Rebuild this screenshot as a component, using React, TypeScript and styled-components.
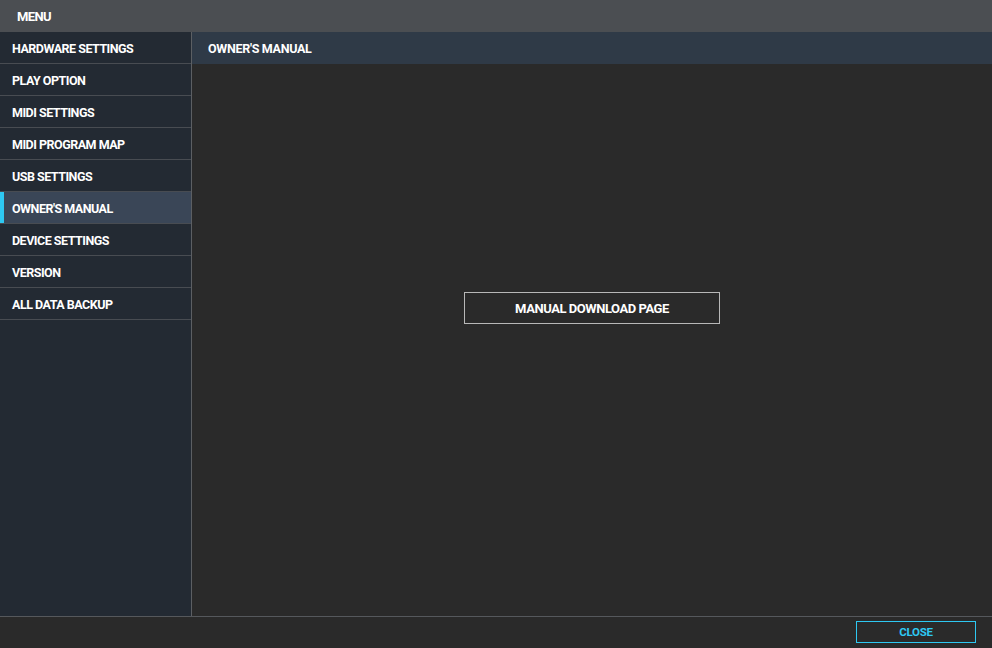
import styled, { createGlobalStyle } from 'styled-components';

const GlobalStyle = createGlobalStyle`
  html, body {
    margin: 0;
    padding: 0;
    background: #2a2a2a;
  }
  * {
    box-sizing: border-box;
  }
`;

const Window = styled.div`
  width: 992px;
  height: 648px;
  display: flex;
  flex-direction: column;
  font-family: Roboto, "Liberation Sans", sans-serif;
  font-weight: 700;
  color: #ffffff;
  background: #2a2a2a;
  overflow: hidden;
`;

const TitleBar = styled.div`
  height: 32px;
  flex: none;
  display: flex;
  align-items: center;
  padding-left: 17px;
  background: #4b4e52;
  font-size: 13px;
  letter-spacing: -0.6px;
`;

const Body = styled.div`
  flex: 1;
  display: flex;
  min-height: 0;
`;

const Sidebar = styled.nav`
  width: 192px;
  flex: none;
  background: #232a33;
  border-right: 1px solid #5c5f63;
  display: flex;
  flex-direction: column;
`;

const MenuItem = styled.div<{ $active?: boolean }>`
  height: 32px;
  display: flex;
  align-items: center;
  padding: 1px 0 0 12px;
  font-size: 12.5px;
  letter-spacing: -0.5px;
  border-bottom: 1px solid #484c52;
  background: ${(p) => (p.$active ? '#3a4657' : 'transparent')};
  box-shadow: ${(p) => (p.$active ? 'inset 4px 0 0 #2ec8f2' : 'none')};
`;

const Main = styled.main`
  flex: 1;
  display: flex;
  flex-direction: column;
  background: #2a2a2a;
`;

const MainHeader = styled.div`
  height: 32px;
  flex: none;
  display: flex;
  align-items: center;
  padding-left: 16px;
  background: #2f3a47;
  font-size: 12.5px;
  letter-spacing: -0.3px;
`;

const Content = styled.div`
  flex: 1;
  display: flex;
  justify-content: center;
  align-items: center;
  padding-bottom: 64px;
`;

const OutlineButton = styled.button`
  width: 256px;
  height: 32px;
  background: transparent;
  border: 1px solid #b8b8b8;
  color: #ffffff;
  font-family: inherit;
  font-weight: 700;
  font-size: 13px;
  letter-spacing: -0.45px;
  cursor: pointer;
`;

const Footer = styled.footer`
  height: 32px;
  flex: none;
  border-top: 1px solid #55585c;
  display: flex;
  justify-content: flex-end;
  align-items: center;
  padding: 0 16px 2px 0;
  background: #2a2a2a;
`;

const CloseButton = styled.button`
  width: 120px;
  height: 22px;
  background: transparent;
  border: 1px solid #2ec8f2;
  color: #2ec8f2;
  font-family: inherit;
  font-weight: 700;
  font-size: 11.5px;
  letter-spacing: -0.3px;
  cursor: pointer;
`;

const items = [
  'HARDWARE SETTINGS',
  'PLAY OPTION',
  'MIDI SETTINGS',
  'MIDI PROGRAM MAP',
  'USB SETTINGS',
  "OWNER'S MANUAL",
  'DEVICE SETTINGS',
  'VERSION',
  'ALL DATA BACKUP',
];

export default function App() {
  return (
    <>
      <GlobalStyle />
      <Window>
        <TitleBar>MENU</TitleBar>
        <Body>
          <Sidebar>
            {items.map((item) => (
              <MenuItem key={item} $active={item === "OWNER'S MANUAL"}>
                {item}
              </MenuItem>
            ))}
          </Sidebar>
          <Main>
            <MainHeader>OWNER'S MANUAL</MainHeader>
            <Content>
              <OutlineButton>MANUAL DOWNLOAD PAGE</OutlineButton>
            </Content>
          </Main>
        </Body>
        <Footer>
          <CloseButton>CLOSE</CloseButton>
        </Footer>
      </Window>
    </>
  );
}
